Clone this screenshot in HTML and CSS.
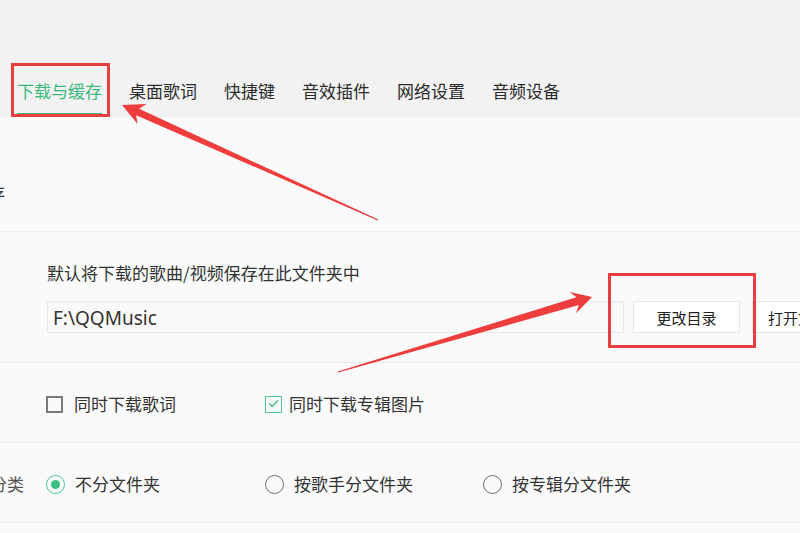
FILE: index.html
```html
<!DOCTYPE html>
<html lang="zh-CN">
<head>
<meta charset="utf-8">
<title>下载与缓存</title>
<link rel="stylesheet" href="styles.css">
</head>
<body>
<div class="page">
  <nav class="tabs">
    <div class="tab active">下载与缓存</div>
    <div class="tab">桌面歌词</div>
    <div class="tab">快捷键</div>
    <div class="tab">音效插件</div>
    <div class="tab">网络设置</div>
    <div class="tab">音频设备</div>
  </nav>
  <main class="content">
    <section class="row row-head">
      <div class="side side-head"><span>下载与缓存</span></div>
    </section>
    <section class="row row-dir">
      <div class="dir-label">默认将下载的歌曲/视频保存在此文件夹中</div>
      <div class="dir-line">
        <div class="path-box">F:\QQMusic</div>
        <button class="btn btn-change">更改目录</button>
        <button class="btn btn-open">打开文件夹</button>
      </div>
    </section>
    <section class="row row-opts">
      <div class="side"></div>
      <div class="opt-grid">
        <label class="opt"><span class="check"></span><span>同时下载歌词</span></label>
        <label class="opt"><span class="check on"><svg viewBox="0 0 17 17" width="17" height="17"><path d="M4.2 8.6 L7.3 11.6 L12.9 5.6" fill="none" stroke="#3fbf84" stroke-width="1.4"/></svg></span><span>同时下载专辑图片</span></label>
      </div>
    </section>
    <section class="row row-opts">
      <div class="side side-label"><span>文件分类</span></div>
      <div class="opt-grid">
        <label class="opt"><span class="radio on"></span><span>不分文件夹</span></label>
        <label class="opt"><span class="radio"></span><span>按歌手分文件夹</span></label>
        <label class="opt"><span class="radio"></span><span>按专辑分文件夹</span></label>
      </div>
    </section>
    <section class="row row-tail"></section>
  </main>
  <svg class="marks" width="800" height="533" viewBox="0 0 800 533">
    <rect x="12.5" y="64.5" width="96" height="51" fill="none" stroke="#e63f3f" stroke-width="3"/>
    <rect x="609.5" y="274.5" width="145" height="72" fill="none" stroke="#e63f3f" stroke-width="3"/>
    <polygon fill="#ee3d3d" points="122,105 137.6,124.0 136.1,115.2 377.7,220.5 378.3,219.5 139.0,108.8 146.6,104.0"/>
    <polygon fill="#ee3d3d" points="592,297 569.7,292.1 576.4,297.3 337.8,371.4 338.2,372.6 578.8,305.1 575.9,313.2"/>
  </svg>
</div>
</body>
</html>
```

FILE: styles.css
```css
html, body {
  margin: 0;
  padding: 0;
  background: #fafafa;
}
body {
  font-family: "Noto Sans CJK SC", "Noto Sans", sans-serif;
  color: #333;
  overflow: hidden;
}
.page {
  position: relative;
  width: 800px;
  height: 533px;
  overflow: hidden;
}
.tabs {
  height: 117px;
  box-sizing: border-box;
  background: #f2f2f2;
  display: flex;
  align-items: flex-end;
  padding-left: 17px;
  padding-bottom: 1px;
  gap: 27px;
}
.tab {
  font-size: 17px;
  line-height: 24px;
  padding-bottom: 10px;
  border-bottom: 3px solid transparent;
  color: #2b2b2b;
  white-space: nowrap;
}
.tab.active {
  color: #3cb97e;
  border-bottom-color: #3cb97e;
}
.content {
  background: #fafafa;
}
.row {
  border-bottom: 1px solid #ebebeb;
  box-sizing: border-box;
  display: flex;
}
.row-head {
  height: 115px;
  align-items: flex-start;
  padding-top: 64px;
}
.side {
  width: 24px;
  flex: none;
  display: flex;
  justify-content: flex-end;
  margin-right: 22px;
  font-size: 17px;
  line-height: 24px;
  white-space: nowrap;
  color: #555;
}
.side-head {
  width: 5px;
  color: #333;
}
.row-dir {
  height: 131px;
  flex-direction: column;
  padding: 29px 0 0 47px;
}
.dir-label {
  font-size: 17px;
  line-height: 24px;
  color: #333;
  white-space: nowrap;
}
.dir-line {
  display: flex;
  margin-top: 16px;
  height: 32px;
}
.path-box {
  width: 577px;
  flex: none;
  box-sizing: border-box;
  border: 1px solid #e8e8e8;
  background: #f9f9f9;
  padding-left: 5px;
  font-family: "Noto Sans", sans-serif;
  font-size: 19px;
  line-height: 33px;
  color: #333;
}
.btn {
  flex: none;
  box-sizing: border-box;
  height: 32px;
  border: 1px solid #e6e6e6;
  background: #fff;
  font-family: "Noto Sans CJK SC", sans-serif;
  font-size: 15px;
  color: #222;
  padding: 0;
}
.btn-change {
  width: 107px;
  margin-left: 9px;
}
.btn-open {
  width: 110px;
  margin-left: 12px;
  text-align: left;
  padding-left: 15px;
}
.row-opts {
  height: 80px;
  align-items: center;
  padding-top: 3px;
}
.opt-grid {
  display: grid;
  grid-template-columns: 219px 218px 219px;
}
.opt {
  display: flex;
  align-items: center;
  font-size: 17px;
  line-height: 24px;
  color: #333;
  white-space: nowrap;
}
.check {
  width: 17px;
  height: 17px;
  box-sizing: border-box;
  border: 2px solid #7a7a7a;
  margin-right: 11px;
  flex: none;
  position: relative;
}
.check.on {
  border: 1.5px solid #56c48f;
  margin-right: 7px;
}
.check.on svg {
  position: absolute;
  left: -1.5px;
  top: -1.5px;
}
.radio {
  width: 19px;
  height: 19px;
  box-sizing: border-box;
  border: 1.5px solid #6f6f6f;
  border-radius: 50%;
  margin-right: 10px;
  flex: none;
  display: flex;
  align-items: center;
  justify-content: center;
}
.radio.on {
  border-color: #4cc48c;
}
.radio.on::after {
  content: "";
  width: 9px;
  height: 9px;
  border-radius: 50%;
  background: #3cbf80;
}
.row-tail {
  height: 20px;
  border-bottom: none;
}
.marks {
  position: absolute;
  left: 0;
  top: 0;
  pointer-events: none;
}
```
